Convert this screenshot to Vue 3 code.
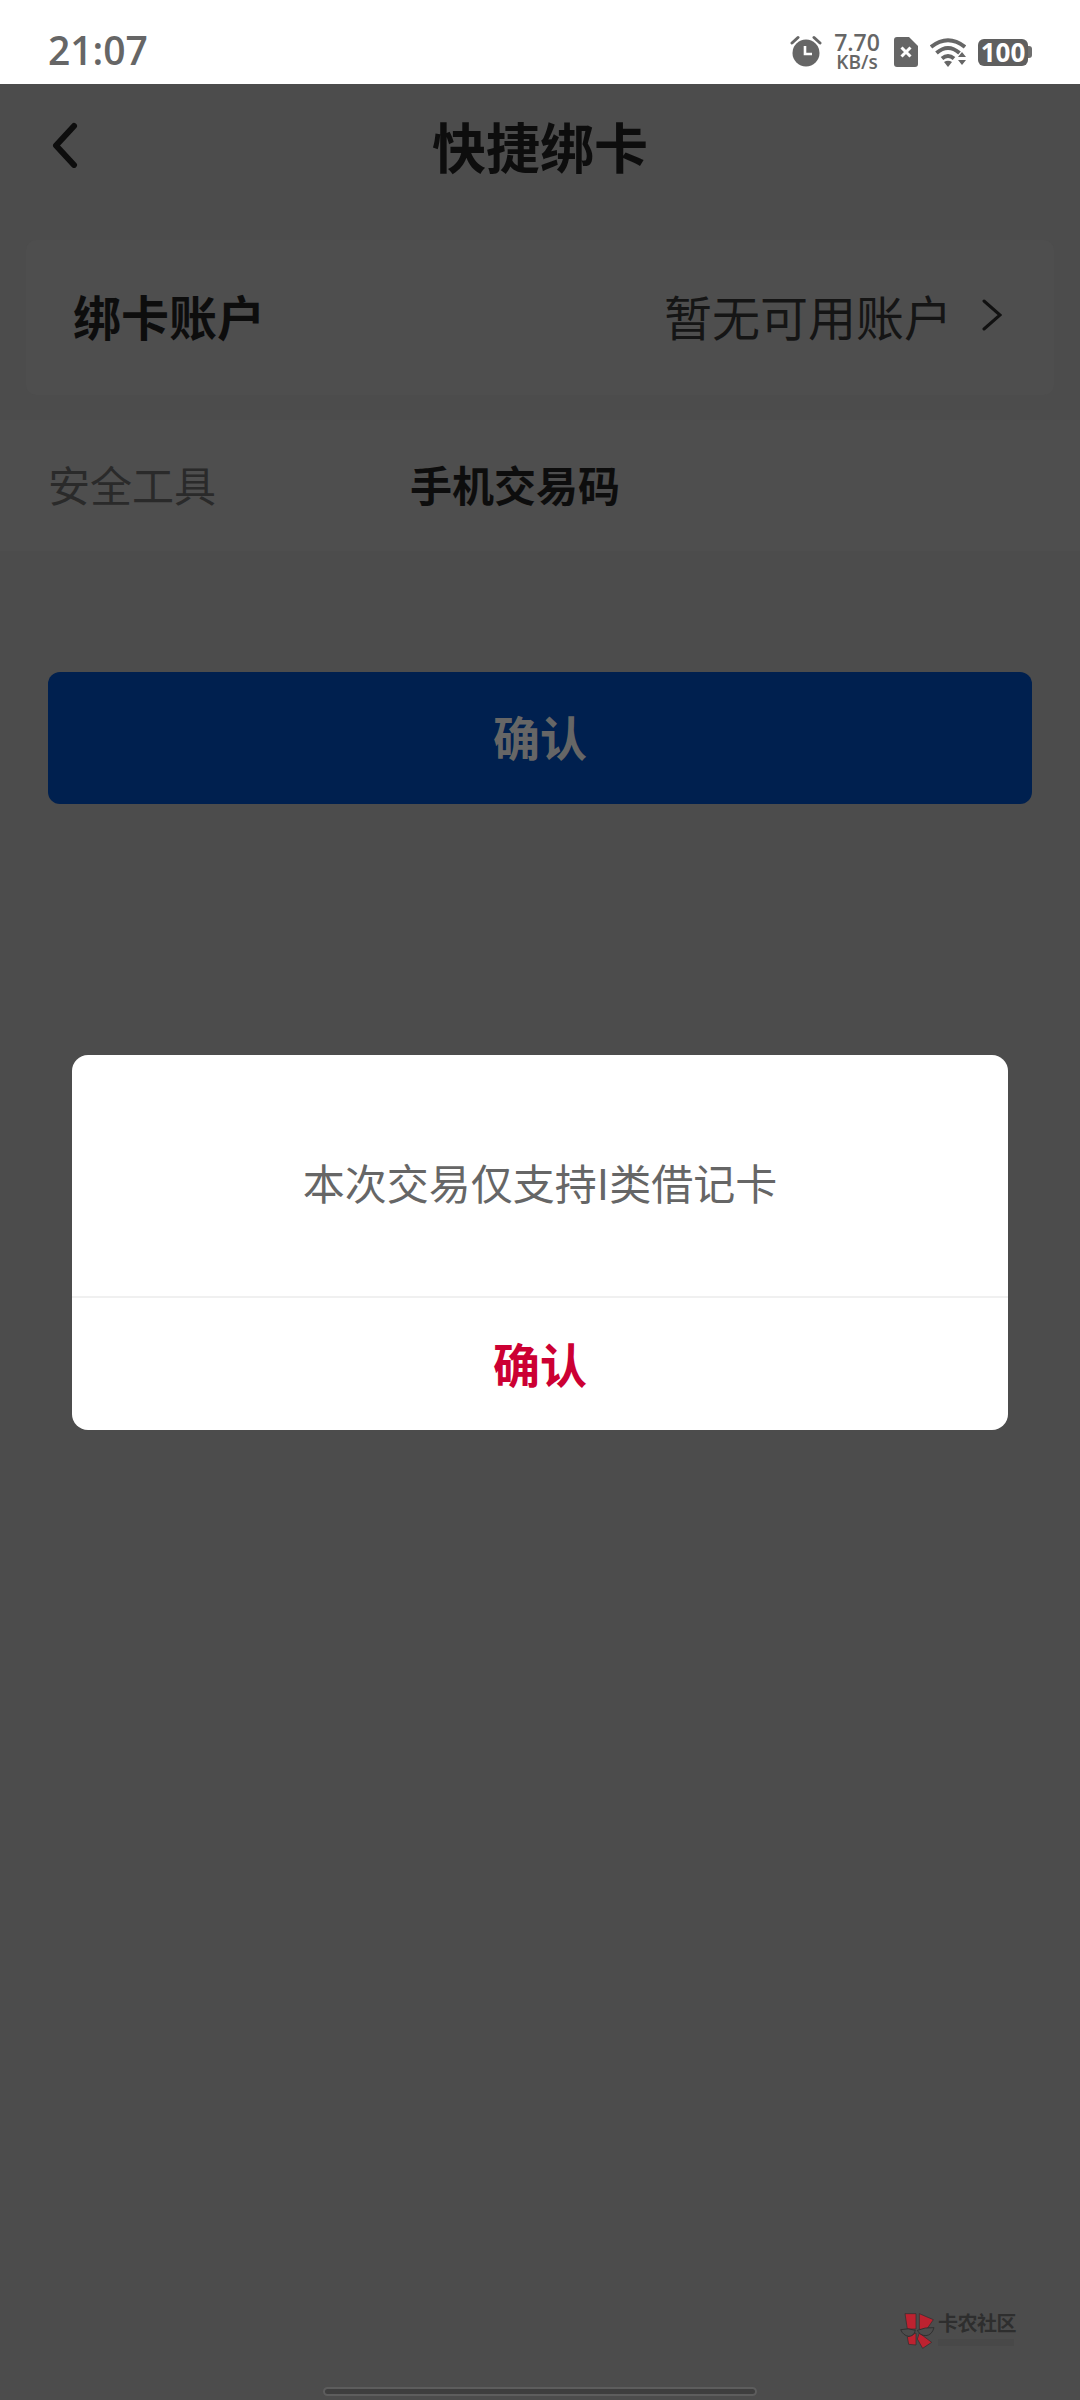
<script setup>
const dialogText = '本次交易仅支持I类借记卡'
</script>

<template>
  <div class="screen">
    <!-- 状态栏 -->
    <div class="status-bar">
      <span class="time">21:07</span>
      <div class="status-icons">
        <svg class="ic-alarm" viewBox="0 0 32 32" width="32" height="32">
          <circle cx="16" cy="18" r="13.5" fill="#666" />
          <path d="M2 8 L8 2.5 M30 8 L24 2.5" stroke="#666" stroke-width="3" stroke-linecap="round" />
          <path d="M15 11 V19 H22" stroke="#fff" stroke-width="2.6" fill="none" />
        </svg>
        <div class="speed">
          <span class="speed-num">7.70</span>
          <span class="speed-unit">KB/s</span>
        </div>
        <svg class="ic-sim" viewBox="0 0 24 30" width="24" height="30">
          <path d="M3 0 H15 L24 9 V27 Q24 30 21 30 H3 Q0 30 0 27 V3 Q0 0 3 0 Z" fill="#666" />
          <path d="M7.5 10.5 L16.5 19.5 M16.5 10.5 L7.5 19.5" stroke="#fff" stroke-width="3" />
        </svg>
        <svg class="ic-wifi" viewBox="0 0 36 30" width="36" height="30">
          <path d="M1 10 Q18 -3.5 35 10" stroke="#666" stroke-width="4" fill="none" />
          <path d="M6.5 16 Q18 6 29.5 16" stroke="#666" stroke-width="4" fill="none" />
          <path d="M12 21.5 Q18 16.5 24 21.5" stroke="#666" stroke-width="4" fill="none" />
          <path d="M14 25 Q18 22.5 22 25 L18 30 Z" fill="#666" />
          <path d="M28 20 L32 15 L36 20 Z M28 23 H36 L32 28 Z" fill="#666" />
        </svg>
        <div class="battery">
          <span class="battery-body">100</span>
          <span class="battery-nub"></span>
        </div>
      </div>
    </div>

    <div class="page">
      <!-- 导航 -->
      <div class="nav">
        <svg class="back" viewBox="0 0 26 46" width="26" height="46">
          <path d="M22 4 L4 23.5 L22 43" stroke="#0d0d0d" stroke-width="6" fill="none" stroke-linecap="round" stroke-linejoin="round" />
        </svg>
        <h1 class="nav-title">快捷绑卡</h1>
      </div>

      <div class="account-card">
        <span class="account-label">绑卡账户</span>
        <div class="account-value">
          <span>暂无可用账户</span>
          <svg viewBox="0 0 20 32" width="20" height="32">
            <path d="M2 2 L18 16 L2 30" stroke="#111" stroke-width="3" fill="none" stroke-linecap="round" />
          </svg>
        </div>
      </div>

      <div class="tool-row">
        <span class="tool-label">安全工具</span>
        <span class="tool-value">手机交易码</span>
      </div>

      <button class="btn-confirm">确认</button>

      <!-- 水印 -->
      <div class="watermark">
        <svg viewBox="60 40 105 108" width="35" height="36">
          <path d="M75 42 H108 V88 H82 Z M118 42 L160 60 L136 95 L118 88 Z M82 112 L108 100 V136 L86 134 Z M118 100 L155 128 L128 146 L112 118 Z" fill="#bd2230" stroke="#2e2e2e" stroke-width="2" />
          <path d="M62 90 Q85 84 106 92 Q102 110 86 110 Q70 108 62 90 M112 92 Q135 82 162 84 Q156 106 138 108 Q120 108 112 92" fill="#4c4c4c" stroke="#2b2b2b" stroke-width="2.5" />
        </svg>
        <div class="mark-text">
          <span class="mark-name">卡农社区</span>
          <span class="mark-sub"></span>
        </div>
      </div>

      <div class="home-bar"></div>
    </div>

    <!-- 弹窗 -->
    <div class="dialog">
      <div class="dialog-body">{{ dialogText }}</div>
      <div class="dialog-action">确认</div>
    </div>
  </div>
</template>

<style>
html, body {
  margin: 0;
  background: #4c4c4c;
}
</style>

<style scoped>
.screen {
  position: relative;
  width: 1080px;
  height: 2400px;
  overflow: hidden;
  font-family: "Noto Sans CJK SC", "Noto Sans", sans-serif;
  background: #4c4c4c;
}

/* 状态栏 */
.status-bar {
  height: 84px;
  box-sizing: border-box;
  padding: 0 48px;
  background: #fff;
  display: flex;
  align-items: center;
  justify-content: space-between;
}

.time {
  font-family: "Open Sans", "Noto Sans", sans-serif;
  font-size: 39px;
  font-weight: 600;
  color: #666;
  line-height: 1;
  margin-top: 14px;
}

.status-icons {
  display: flex;
  align-items: center;
  margin-top: 20px;
}

.ic-alarm {
  margin-right: 13px;
  margin-top: -2px;
}

.speed {
  display: flex;
  flex-direction: column;
  align-items: center;
  font-family: "Open Sans", "Noto Sans", sans-serif;
  font-weight: 600;
  color: #666;
  width: 44px;
  margin-right: 15px;
}

.speed-num {
  font-size: 23px;
  line-height: 21px;
}

.speed-unit {
  font-size: 19px;
  line-height: 19px;
}

.ic-wifi {
  margin-left: 12px;
  margin-right: 12px;
}

.battery {
  display: flex;
  align-items: center;
}

.battery-body {
  width: 50px;
  height: 27px;
  border-radius: 6px;
  background: #5f5f5f;
  color: #fff;
  font-family: "Open Sans", "Noto Sans", sans-serif;
  font-size: 26px;
  font-weight: 700;
  line-height: 27px;
  text-align: center;
}

.battery-nub {
  width: 4px;
  height: 12px;
  background: #6e6e6e;
  border-radius: 0 3px 3px 0;
}

/* 页面 */
.page {
  position: relative;
  height: 2316px;
  display: flex;
  flex-direction: column;
}

.nav {
  position: relative;
  height: 156px;
  display: flex;
  align-items: center;
  justify-content: center;
  flex-shrink: 0;
}

.back {
  position: absolute;
  left: 52px;
  top: 38px;
}

.nav-title {
  margin: -33px 0 0;
  font-size: 54px;
  font-weight: 700;
  color: #0d0d0d;
  line-height: 1;
}

.account-card {
  height: 155px;
  box-sizing: border-box;
  margin: 0 26px;
  padding: 0 52px 6px 47px;
  background: #4e4e4e;
  border-radius: 10px;
  display: flex;
  align-items: center;
  justify-content: space-between;
  flex-shrink: 0;
}

.account-label {
  font-size: 48px;
  font-weight: 700;
  color: #0d0d0d;
}

.account-value {
  display: flex;
  align-items: center;
  gap: 30px;
  font-size: 48px;
  color: #151515;
}

.tool-row {
  height: 131px;
  margin-top: 25px;
  box-sizing: border-box;
  padding: 0 0 5px 48px;
  background: #4e4e4e;
  display: flex;
  align-items: center;
  flex-shrink: 0;
}

.tool-label {
  width: 362px;
  font-size: 42px;
  color: #2a2a2a;
}

.tool-value {
  font-size: 42px;
  font-weight: 700;
  color: #0d0d0d;
}

.btn-confirm {
  display: block;
  height: 132px;
  margin: 121px 48px 0;
  padding: 0 0 6px;
  border: none;
  border-radius: 12px;
  background: #00204f;
  color: #666;
  font-family: inherit;
  font-size: 47px;
  font-weight: 700;
  flex-shrink: 0;
}

/* 水印 */
.watermark {
  position: absolute;
  left: 900px;
  top: 2229px;
  display: flex;
  gap: 3px;
}

.mark-text {
  display: flex;
  flex-direction: column;
  gap: 6px;
}

.mark-name {
  font-size: 20px;
  font-weight: 700;
  color: #2e2e2e;
  line-height: 20px;
  letter-spacing: -0.5px;
}

.mark-sub {
  display: block;
  width: 76px;
  height: 7px;
  background: #484848;
}

.home-bar {
  position: absolute;
  left: 323px;
  top: 2303px;
  width: 430px;
  height: 5px;
  border: 2px solid #5d5d5d;
  border-radius: 5px;
  background: #3e3e3e;
}

/* 弹窗 */
.dialog {
  position: absolute;
  left: 72px;
  top: 1055px;
  width: 936px;
  height: 375px;
  background: #fff;
  border-radius: 16px;
  display: flex;
  flex-direction: column;
  overflow: hidden;
}

.dialog-body {
  height: 243px;
  box-sizing: border-box;
  padding-top: 12px;
  border-bottom: 2px solid #f0f0f0;
  display: flex;
  align-items: center;
  justify-content: center;
  font-size: 42px;
  color: #666;
}

.dialog-action {
  flex: 1;
  display: flex;
  align-items: center;
  justify-content: center;
  padding-bottom: 4px;
  font-size: 47px;
  font-weight: 700;
  color: #cc0033;
}
</style>
